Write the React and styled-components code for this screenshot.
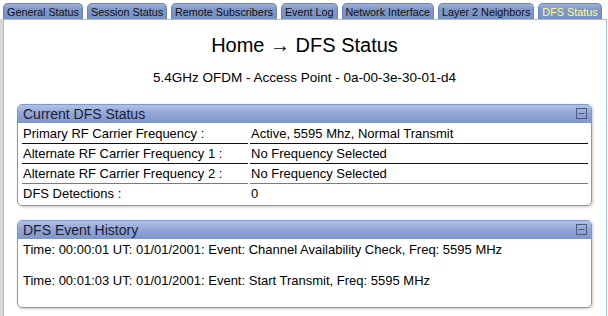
import React from 'react';
import styled, { createGlobalStyle } from 'styled-components';

const GlobalStyle = createGlobalStyle`
    body {
        margin: 0;
        background: #fff;
        font-family: "Liberation Sans", Arial, sans-serif;
        color: #000;
    }
`;

const Page = styled.div`
    padding: 3px 1px 0 3px;
`;

const Tabs = styled.div`
    display: flex;
    gap: 4px;
    height: 16px;
`;

const Tab = styled.div`
    height: 16px;
    line-height: 16px;
    padding: 0 3px;
    font-size: 10.8px;
    color: ${props => props.$active ? '#ffff8c' : '#111'};
    background: linear-gradient(#9fb3dc 0%, #7f98ca 35%, #7690c4 100%);
    border: 1px solid #6b84b8;
    border-bottom: none;
    border-radius: 5px 5px 0 0;
    box-sizing: border-box;
    white-space: nowrap;
`;

const Content = styled.div`
    border: 1px solid #a9badc;
    border-bottom: none;
    min-height: 300px;
    box-shadow: -3px 0 0 #d8d8d8;
    padding: 13px 14px 0 13px;
`;

const Title = styled.div`
    text-align: center;
    font-size: 20px;
    line-height: 24px;
`;

const Subtitle = styled.div`
    text-align: center;
    font-size: 13.5px;
    line-height: 16px;
    margin: 13px 0 18px;
`;

const Panel = styled.div`
    border: 1px solid #8097c9;
    border-radius: 5px;
    box-shadow: 1px 1px 3px rgba(0, 0, 0, 0.22);
    margin-bottom: 14px;
    overflow: hidden;
`;

const PanelHeader = styled.div`
    display: flex;
    align-items: flex-start;
    justify-content: space-between;
    height: 18px;
    line-height: 18px;
    padding: 0 4px 0 5px;
    font-size: 14px;
    color: #1a2033;
    background: linear-gradient(#b2c1e3 0%, #93a7d5 45%, #7f96c9 100%);
`;

const Collapse = styled.svg`
    margin-top: 3px;
    flex: none;
`;

const StatusGrid = styled.div`
    display: grid;
    grid-template-columns: 226px 1fr;
    column-gap: 2px;
    padding: 1px 3px 1px 4px;
`;

const Cell = styled.div`
    height: 20px;
    line-height: 20px;
    font-size: 13px;
    padding-left: 1px;
    box-sizing: border-box;
    border-bottom: 1px solid ${props => props.$edge || 'transparent'};
    white-space: nowrap;
`;

const History = styled.div`
    padding: 3px 5px 3px;
`;

const Entry = styled.p`
    margin: 0 0 15px;
    font-size: 13px;
    line-height: 16px;
`;

const tabs = [
    'General Status',
    'Session Status',
    'Remote Subscribers',
    'Event Log',
    'Network Interface',
    'Layer 2 Neighbors',
    'DFS Status',
];

const status = [
    ['Primary RF Carrier Frequency :', 'Active, 5595 Mhz, Normal Transmit', '#111'],
    ['Alternate RF Carrier Frequency 1 :', 'No Frequency Selected', '#111'],
    ['Alternate RF Carrier Frequency 2 :', 'No Frequency Selected', '#7a7a7a'],
    ['DFS Detections :', '0', null],
];

const events = [
    'Time: 00:00:01 UT: 01/01/2001: Event: Channel Availability Check, Freq: 5595 MHz',
    'Time: 00:01:03 UT: 01/01/2001: Event: Start Transmit, Freq: 5595 MHz',
];

function CollapseIcon() {
    return (
        <Collapse width="11" height="11" viewBox="0 0 11 11">
            <rect x="0.5" y="0.5" width="10" height="10" fill="none" stroke="#4b5a80" />
            <line x1="2.5" y1="5.5" x2="8.5" y2="5.5" stroke="#4b5a80" />
        </Collapse>
    );
}

export default function App() {
    return (
        <Page>
            <GlobalStyle />
            <Tabs>
                {tabs.map(name => (
                    <Tab key={name} $active={name === 'DFS Status'}>{name}</Tab>
                ))}
            </Tabs>
            <Content>
                <Title>Home → DFS Status</Title>
                <Subtitle>5.4GHz OFDM - Access Point - 0a-00-3e-30-01-d4</Subtitle>
                <Panel>
                    <PanelHeader>
                        Current DFS Status
                        <CollapseIcon />
                    </PanelHeader>
                    <StatusGrid>
                        {status.map(([label, value, edge]) => (
                            <React.Fragment key={label}>
                                <Cell $edge={edge}>{label}</Cell>
                                <Cell $edge={edge}>{value}</Cell>
                            </React.Fragment>
                        ))}
                    </StatusGrid>
                </Panel>
                <Panel>
                    <PanelHeader>
                        DFS Event History
                        <CollapseIcon />
                    </PanelHeader>
                    <History>
                        {events.map(text => (
                            <Entry key={text}>{text}</Entry>
                        ))}
                    </History>
                </Panel>
            </Content>
        </Page>
    );
}
